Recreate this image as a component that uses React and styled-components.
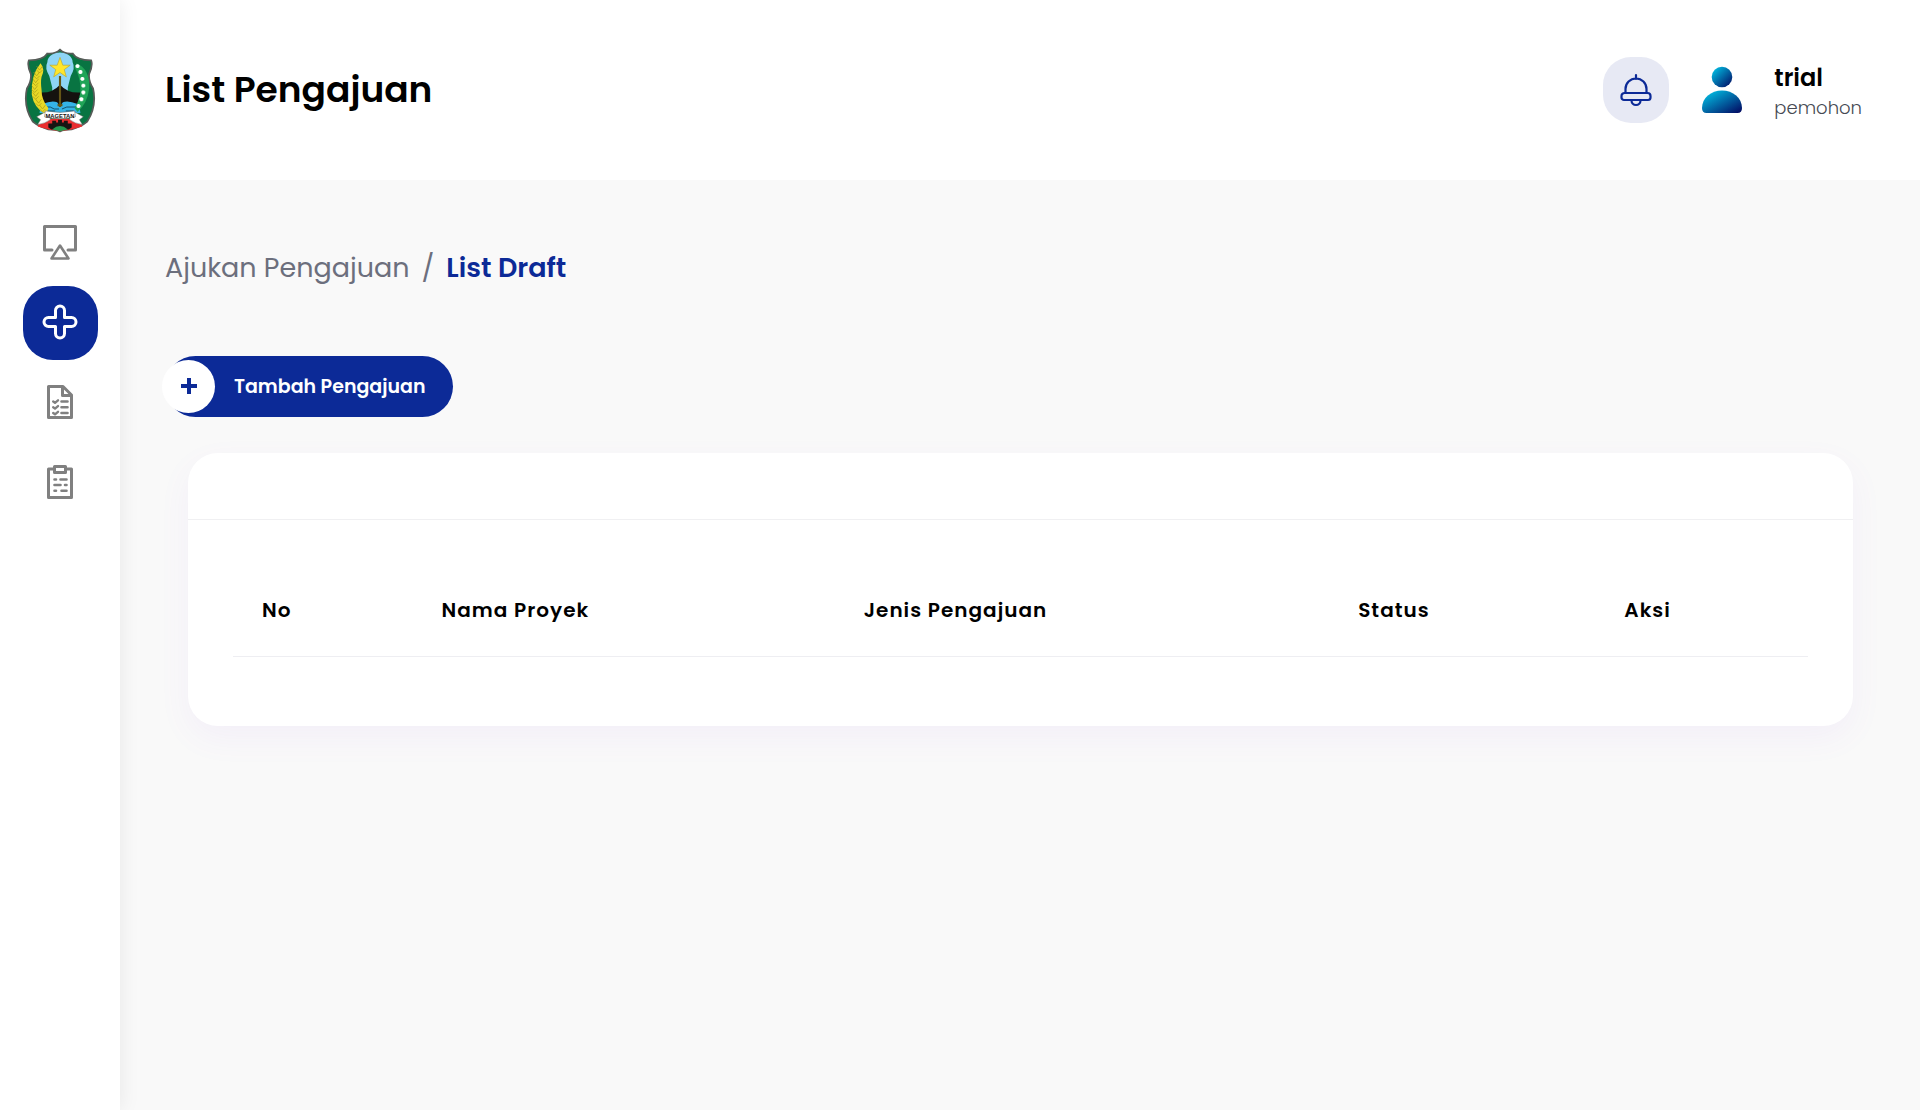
import React from "react";
import styled, { createGlobalStyle, css } from "styled-components";

const GlobalStyle = createGlobalStyle`
  *, *::before, *::after { box-sizing: border-box; }
  body {
    margin: 0;
    background: #f9f9f9;
    color: #000;
    font-family: Poppins, Inter, "Open Sans", sans-serif;
    font-size: 20px;
  }
  a { color: inherit; text-decoration: none; }
  h1, p { margin: 0; font-weight: inherit; }
  svg { display: block; }
`;

const Shell = styled.div`
  display: flex;
  min-height: 100vh;
`;

const Sidebar = styled.aside`
  display: flex;
  flex-direction: column;
  flex: 0 0 120px;
  align-items: center;
  gap: 72px;
  padding-top: 47px;
  background: #fff;
  box-shadow: 0 0 20px rgba(0, 0, 0, 0.08);
  clip-path: inset(0 -24px 0 0);
  z-index: 1;
`;

const NavList = styled.nav`
  display: flex;
  flex-direction: column;
  gap: 6px;
`;

const NavLink = styled.a`
  display: grid;
  place-items: center;
  width: 75px;
  height: 74px;
  padding-bottom: 2px;
  border-radius: 30px;
  color: #808080;
  ${(p) => p.$active && css`
    background: #0c2a97;
    color: #fff;
  `}
`;

const Page = styled.div`
  flex: 1;
  min-width: 0;
`;

const Header = styled.header`
  display: flex;
  align-items: center;
  justify-content: space-between;
  height: 180px;
  padding: 0 58px 0 45px;
  background: #fff;
`;

const Title = styled.h1`
  font-size: 36px;
  font-weight: 600;
  line-height: 54px;
`;

const Tools = styled.div`
  display: flex;
  align-items: center;
`;

const BellButton = styled.button`
  display: grid;
  place-items: center;
  width: 66px;
  height: 66px;
  margin-right: 32px;
  padding: 0;
  border: 0;
  border-radius: 28px;
  background: #e7e9f4;
  color: #0c2a97;
`;

const Profile = styled.a`
  display: flex;
  align-items: center;
  gap: 31px;
`;

const UserText = styled.div`
  padding-top: 4px;
`;

const UserName = styled.p`
  font-size: 24px;
  font-weight: 600;
  line-height: 32px;
`;

const UserRole = styled.p`
  color: #464a53;
  font-size: 18px;
  font-weight: 300;
  line-height: 28px;
`;

const Content = styled.main`
  padding: 67px 45px 45px;
`;

const Crumbs = styled.nav`
  display: flex;
  align-items: center;
  gap: 12px;
  color: #6c6f7d;
  font-size: 27px;
  line-height: 42px;
`;

const Current = styled.a`
  color: #0c2a97;
  font-weight: 600;
`;

const AddButton = styled.button`
  display: flex;
  align-items: center;
  gap: 19px;
  height: 61px;
  margin: 67px 0 36px;
  padding: 0 28px 0 0;
  border: 0;
  border-radius: 31px;
  background: #0c2a97;
  color: #fff;
  font: inherit;
  font-size: 19px;
  font-weight: 600;
`;

const PlusBadge = styled.span`
  display: grid;
  place-items: center;
  width: 53px;
  height: 53px;
  margin-left: -3px;
  padding-bottom: 2px;
  border-radius: 50%;
  background: #fff;
  color: #0c2a97;
`;

const Card = styled.section`
  margin: 0 22px 0 23px;
  border-radius: 30px;
  background: #fff;
  box-shadow: 0 12px 33px rgba(150, 90, 240, 0.06);
`;

const CardHeader = styled.div`
  height: 67px;
  border-bottom: 1px solid #f0f0f2;
`;

const CardBody = styled.div`
  padding: 45px 45px 69px;
`;

const Table = styled.table`
  width: 100%;
  border-collapse: collapse;
  table-layout: fixed;
`;

const HeadCell = styled.th`
  width: ${(p) => p.$width};
  height: 91px;
  padding: 0 0 0 29px;
  border-bottom: 1px solid #eeeef2;
  font-size: 20px;
  font-weight: 600;
  letter-spacing: 1px;
  text-align: left;
`;

const columns = [
  { label: "No", width: "11.4%" },
  { label: "Nama Proyek", width: "26.8%" },
  { label: "Jenis Pengajuan", width: "31.4%" },
  { label: "Status", width: "16.9%" },
  { label: "Aksi", width: "13.5%" },
];

const Line = (props) => (
  <svg width="36" height="36" viewBox="0 0 36 36" fill="none" stroke="currentColor" strokeWidth="3" strokeLinecap="round" strokeLinejoin="round" aria-hidden="true" {...props} />
);

const ScreenIcon = () => (
  <Line>
    <path d="M10 26H2.500V2.500H33.500V26H26" />
    <path d="M18 21.500L26.500 34.500H9.500Z" strokeWidth="2.600" />
  </Line>
);

const CrossIcon = () => (
  <Line>
    <path d="M13.500 6.500a4.500 4.500 0 0 1 9 0V13.500H29.500a4.500 4.500 0 0 1 0 9H22.500V29.500a4.500 4.500 0 0 1-9 0V22.500H6.500a4.500 4.500 0 0 1 0-9H13.500Z" />
  </Line>
);

const ChecklistIcon = () => (
  <Line>
    <path d="M6.500 2.500H21L29.500 11V33.500H6.500Z" />
    <path d="M20.500 3V11.500H29" />
    <path d="M19.500 17.500H25.500M19.500 23.300H25.500M19.500 29H25.500" strokeWidth="2.600" />
    <path d="M11.200 17.500l1.800 1.300 3-2.500M11.200 23.300l1.800 1.300 3-2.500M11.200 29l1.800 1.300 3-2.500" strokeWidth="2.400" />
  </Line>
);

const ClipboardIcon = () => (
  <Line>
    <path d="M12 5H6.500V33.500H29.500V5H24" />
    <path d="M12.500 2.500H23.500V8.500H12.500Z" />
    <path d="M12.500 15.500H14M18.500 15.500H24.500M12.500 21H18.500M23 21H24.500M12.500 26.700H14M19.500 26.700H24.500" strokeWidth="2.600" />
  </Line>
);

const BellIcon = () => (
  <svg width="34" height="34" viewBox="0 0 34 34" fill="none" stroke="currentColor" strokeWidth="2.200" strokeLinecap="round" strokeLinejoin="round" aria-hidden="true">
    <path d="M17 2V6M6.500 20V16a10.500 10.500 0 0 1 21 0V20" />
    <path d="M5.500 20H28.500a3 3 0 0 1 3 3v1.500a2.500 2.500 0 0 1-2.500 2.500H5a2.500 2.500 0 0 1-2.500-2.500V23a3 3 0 0 1 3-3Z" />
    <path d="M12.500 27.500a4.500 4.500 0 0 0 9 0" />
  </svg>
);

const Avatar = () => (
  <svg width="42" height="66" viewBox="0 0 42 66" aria-hidden="true">
    <defs>
      <linearGradient id="avatarFill" x1="0" y1="0" x2="1" y2="1">
        <stop offset="0" stopColor="#00d0f0" />
        <stop offset="1" stopColor="#03045e" />
      </linearGradient>
    </defs>
    <circle cx="21" cy="20" r="10.300" fill="url(#avatarFill)" />
    <path d="M1 51C1 41 10 33.500 21 33.500S41 41 41 51Q41 56 36.500 56H5.500Q1 56 1 51Z" fill="url(#avatarFill)" />
  </svg>
);

const PlusIcon = () => (
  <svg width="18" height="18" viewBox="0 0 18 18" stroke="currentColor" strokeWidth="4" aria-hidden="true">
    <path d="M9 1V17M1 9H17" />
  </svg>
);

const flowers = [[55, 19], [58, 25], [60, 32], [61, 39], [61, 46], [59, 53], [56, 60]];
const grains = [[16, 21], [13, 27], [12, 34], [11, 41], [12, 48], [15, 55], [19, 61]];

const Crest = () => (
  <svg width="72" height="87" viewBox="0 1 74 86" role="img" aria-label="Magetan">
    <path d="M37 2Q42 7 50 6Q54 13 69 13Q71 18 67 27Q66 34 71 42Q75 60 65 76Q59 81 49 84Q41 84 37 86Q33 84 25 84Q15 81 9 76Q-1 60 3 42Q8 34 7 27Q3 18 5 13Q20 13 24 6Q32 7 37 2Z" fill="#087442" stroke="#555b57" strokeWidth="1.800" />
    <path d="M29 7Q37 3 45 7Q50 10 50 15Q53 21 48 29L45 41V53H29V41L26 29Q21 21 24 15Q24 10 29 7Z" fill="#8ed5f6" />
    <path d="M16 67L18 53H56L58 67Z" fill="#35b4e8" />
    <path d="M18 61h9l4 2h5M39 63l5-2h11M23 65h9M43 65h8" fill="none" stroke="#14506b" strokeWidth="1" />
    <path d="M16 46Q29 47 37 38Q45 47 58 46L55 58Q46 54 40 56L37 60L34 56Q28 54 19 58Z" fill="#15120f" />
    <path d="M37 29V61M34.500 59h5" stroke="#655516" strokeWidth="2.200" />
    <path d="M37 10L39.900 18H47.500L41.400 22.500L43.500 30L37 25.500L30.500 30L32.600 22.500L26.500 18H34.100Z" fill="#ffe62b" stroke="#b9a022" strokeWidth=".6" />
    <path d="M17 16Q22 22 18 30Q17 35 18 43Q18 54 25 62L23 69Q10 62 8 48Q7 28 17 16Z" fill="#e9d926" />
    {grains.map(([x, y]) => (
      <path key={y} d={`M${x - 3} ${y - 2}l3 4 3-4M${x - 3} ${y + 2}l3 3 3-3`} fill="none" stroke="#a79a19" strokeWidth=".7" />
    ))}
    <path d="M54 16Q68 22 67 42Q65 58 55 66L52 62Q59 51 58 40Q57 28 52 20Z" fill="#20a457" />
    {flowers.map(([x, y]) => (
      <path key={y} d={`M${x - 2} ${y}h4M${x} ${y - 2}v4`} stroke="#fff" strokeWidth="2.400" />
    ))}
    <path d="M14 81L18 73H56L60 81L49 84L37 86L25 84Z" fill="#e92e30" />
    <path d="M25 82V78H29V75H33V77H35V74H39V77H41V75H45V78H49V82L46 84H28Z" fill="#171513" />
    <path d="M29 84Q37 77 45 84L37 86Z" fill="#25994f" />
    <path d="M22 66L13 71L17 74L14 79Q22 78 27 74V70ZM52 66L61 71L57 74L60 79Q52 78 47 74V70Z" fill="#fff" stroke="#65615e" strokeWidth=".5" />
    <path d="M22 65Q37 68 52 65L53 71Q37 75 21 71Z" fill="#fff" stroke="#65615e" strokeWidth=".5" />
    <text x="37" y="72" textAnchor="middle" fontSize="6" fontWeight="700" fontFamily="Liberation Sans, sans-serif" fill="#171513">MAGETAN</text>
  </svg>
);

const navItems = [
  { label: "Dashboard", Icon: ScreenIcon },
  { label: "Ajukan Pengajuan", Icon: CrossIcon, active: true },
  { label: "Daftar Pengajuan", Icon: ChecklistIcon },
  { label: "Laporan", Icon: ClipboardIcon },
];

export default function App() {
  return (
    <Shell>
      <GlobalStyle />
      <Sidebar>
        <a href="#home"><Crest /></a>
        <NavList aria-label="Menu">
          {navItems.map(({ label, Icon, active }) => (
            <NavLink key={label} href="#menu" aria-label={label} $active={active}><Icon /></NavLink>
          ))}
        </NavList>
      </Sidebar>
      <Page>
        <Header>
          <Title>List Pengajuan</Title>
          <Tools>
            <BellButton type="button" aria-label="Notifikasi"><BellIcon /></BellButton>
            <Profile href="#profile">
              <Avatar />
              <UserText>
                <UserName>trial</UserName>
                <UserRole>pemohon</UserRole>
              </UserText>
            </Profile>
          </Tools>
        </Header>
        <Content>
          <Crumbs aria-label="Breadcrumb">
            <a href="#pengajuan">Ajukan Pengajuan</a>
            <span>/</span>
            <Current href="#draft" aria-current="page">List Draft</Current>
          </Crumbs>
          <AddButton type="button">
            <PlusBadge><PlusIcon /></PlusBadge>
            Tambah Pengajuan
          </AddButton>
          <Card>
            <CardHeader />
            <CardBody>
              <Table>
                <thead>
                  <tr>
                    {columns.map((c) => (
                      <HeadCell key={c.label} scope="col" $width={c.width}>{c.label}</HeadCell>
                    ))}
                  </tr>
                </thead>
              </Table>
            </CardBody>
          </Card>
        </Content>
      </Page>
    </Shell>
  );
}
